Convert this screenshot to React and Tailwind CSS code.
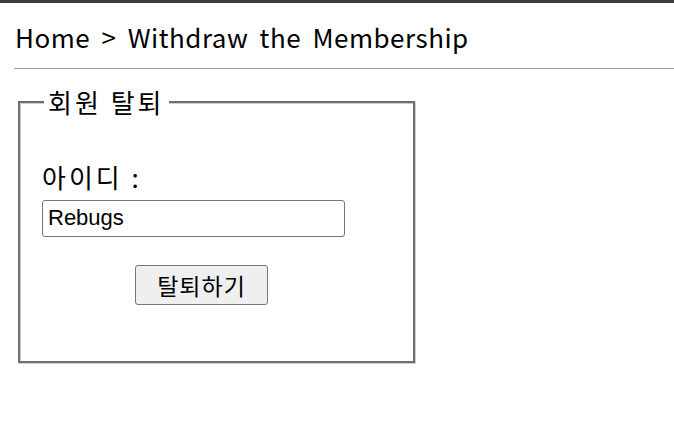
import React from "react";

export default function App() {
  return (
    <div className="min-h-[421px] w-[674px] bg-white border-t-[3px] border-[#3c3c3c] font-['Noto_Sans_CJK_KR','Noto_Sans',sans-serif] text-black">
      <div className="pl-[14px]">
        <div className="h-[65px] flex items-center pl-[1px] pt-[3px] text-[26px] leading-none tracking-[0.5px] [word-spacing:5px]">
          Home &gt; Withdraw the Membership
        </div>
        <div className="h-px bg-[#a0a0a0]" />
      </div>
      <fieldset className="ml-[18px] mt-[17px] w-[397px] h-[277px] border-2 border-[#6f6f6f] shadow-[inset_1px_1px_0_#cfcfcf,1px_1px_0_#cfcfcf] px-[22px]">
        <legend className="px-[4px] ml-[2px] bg-white text-[26px] leading-[32px] tracking-[3px]">회원&nbsp;탈퇴</legend>
        <div className="mt-[44px] text-[26px] leading-[30px] tracking-[3px]">아이디 :</div>
        <input
          type="text"
          defaultValue="Rebugs"
          className="mt-[8px] block w-[303px] h-[37px] border border-[#767676] rounded-[3px] pl-[5px] pr-[6px] pb-[2px] text-[22px] font-['Liberation_Sans',Arial,sans-serif] outline-none"
        />
        <div className="mt-[28px] pl-[93px]">
          <button className="w-[133px] h-[40px] bg-[#efefef] border border-[#767676] rounded-[3px] text-[23px] leading-none tracking-[1px]">
            탈퇴하기
          </button>
        </div>
      </fieldset>
    </div>
  );
}
